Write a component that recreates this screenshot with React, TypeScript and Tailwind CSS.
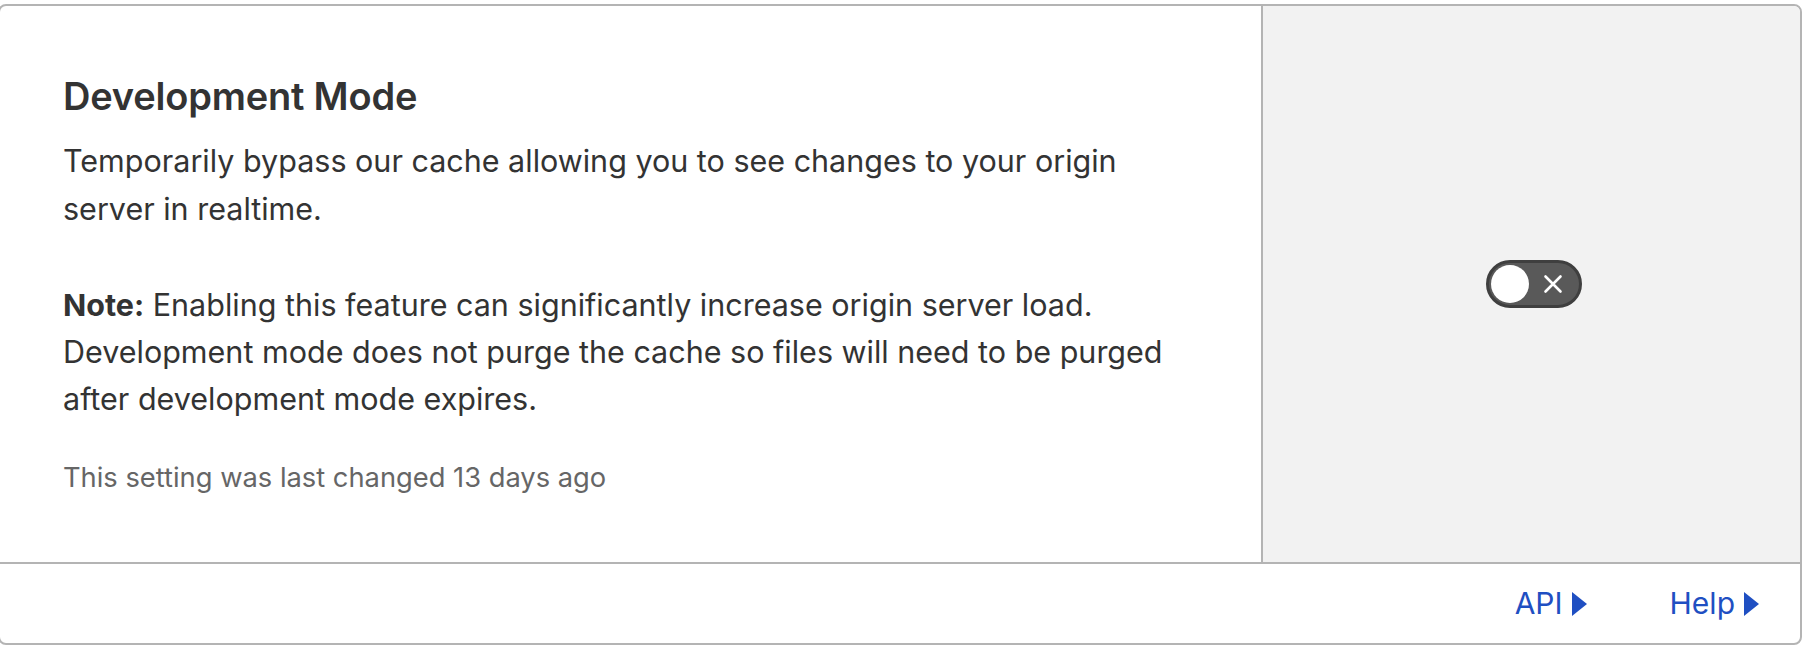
export default function App() {
  return (
    <div
      className="min-h-[646px] w-[1802px] overflow-hidden bg-white pt-[4px]"
      style={{ fontFamily: "Inter, 'Liberation Sans', sans-serif" }}
    >
      <div className="ml-[-2px] w-[1804px] overflow-hidden rounded-[8px] border-2 border-[#b4b4b4] bg-white">
        <div className="flex h-[556px]">
          <div className="flex-1 border-r-2 border-[#b4b4b4] pl-[63px] pt-[67px]">
            <h2 className="text-[38px] font-semibold leading-[46px] tracking-[-0.2px] text-[#333333]">
              Development Mode
            </h2>
            <p className="mt-[18px] text-[30.5px] leading-[48px] text-[#333333]">
              Temporarily bypass our cache allowing you to see changes to your origin
              <br />
              server in realtime.
            </p>
            <p className="mt-[48px] text-[30.5px] leading-[47px] text-[#333333]">
              <strong className="font-bold">Note:</strong> Enabling this feature can
              significantly increase origin server load.
              <br />
              Development mode does not purge the cache so files will need to be purged
              <br />
              after development mode expires.
            </p>
            <p className="mt-[38px] text-[27.3px] leading-[36px] text-[#666666]">
              This setting was last changed 13 days ago
            </p>
          </div>
          <div className="flex w-[537px] items-center justify-center bg-[#f2f2f2] pl-[4px]">
            <button className="flex h-[48px] w-[96px] items-center rounded-full border-[3px] border-[#3f3f3f] bg-[#595959] p-[2px]">
              <span className="h-[38px] w-[38px] rounded-full bg-white" />
              <span className="flex flex-1 items-center justify-center">
                <svg width="20" height="20" viewBox="0 0 20 20">
                  <path
                    d="M2.5 2.5L17.5 17.5M17.5 2.5L2.5 17.5"
                    stroke="white"
                    strokeWidth="2.6"
                    strokeLinecap="round"
                  />
                </svg>
              </span>
            </button>
          </div>
        </div>
        <div className="flex h-[81px] items-center justify-end gap-[83px] border-t-2 border-[#b4b4b4] pr-[41px] text-[30px] text-[#1f4fc2]">
          <a className="flex items-center gap-[9px]">
            API
            <svg width="15" height="24" viewBox="0 0 15 24">
              <path d="M0 0L15 12L0 24Z" fill="#1f4fc2" />
            </svg>
          </a>
          <a className="flex items-center gap-[9px]">
            Help
            <svg width="15" height="24" viewBox="0 0 15 24">
              <path d="M0 0L15 12L0 24Z" fill="#1f4fc2" />
            </svg>
          </a>
        </div>
      </div>
    </div>
  );
}
